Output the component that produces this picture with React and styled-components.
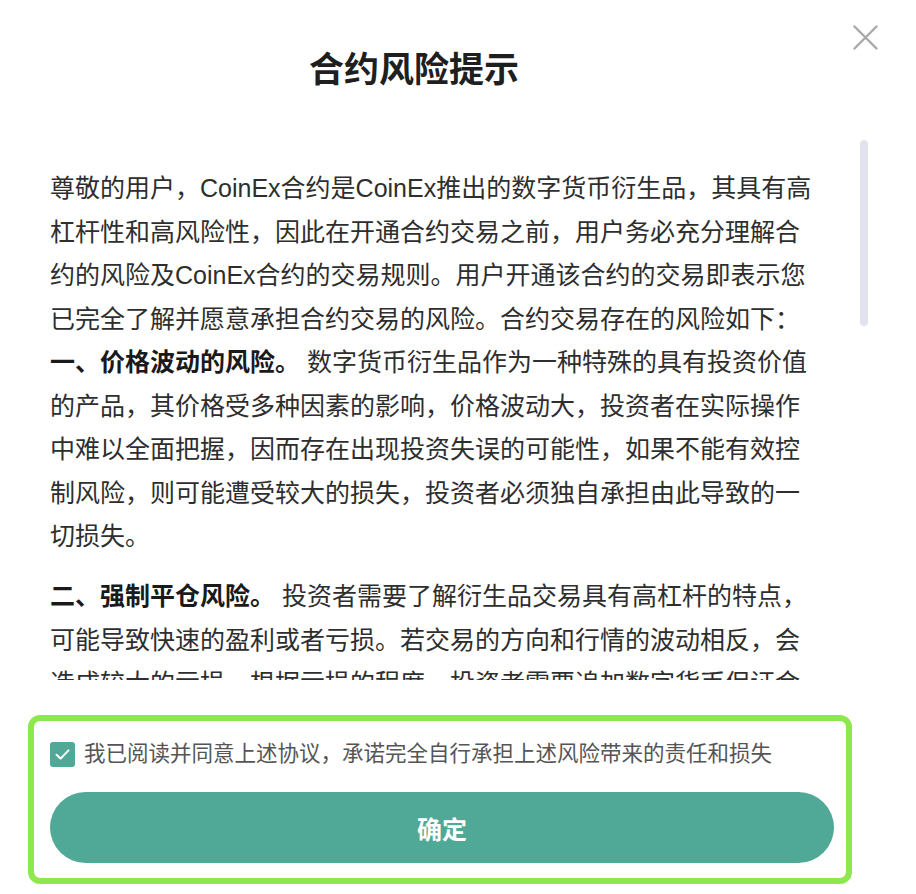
import styled, { createGlobalStyle } from 'styled-components';

const GlobalStyle = createGlobalStyle`
  body {
    margin: 0;
    background: #fff;
    font-family: "Liberation Sans", "Noto Sans CJK SC", sans-serif;
  }
`;

const Modal = styled.div`
  position: relative;
  width: 916px;
  height: 894px;
  display: flex;
  flex-direction: column;
  box-sizing: border-box;
  overflow: hidden;
`;

const Header = styled.div`
  height: 140px;
  flex-shrink: 0;
  box-sizing: border-box;
  padding: 47px 88px 0 0;
`;

const Title = styled.h2`
  margin: 0;
  text-align: center;
  font-size: 35px;
  line-height: 46px;
  font-weight: 700;
  color: #1f1f1f;
`;

const CloseButton = styled.button`
  position: absolute;
  top: 25px;
  right: 38px;
  width: 25px;
  height: 25px;
  padding: 0;
  border: none;
  background: none;
  cursor: pointer;
`;

const ScrollWrap = styled.div`
  position: relative;
  margin-left: 50px;
  width: 819px;
  height: 540px;
  flex-shrink: 0;
`;

const ScrollArea = styled.div`
  height: 100%;
  overflow-y: auto;

  &::-webkit-scrollbar {
    width: 0;
  }
`;

/* custom thumb drawn over the list, the native bar is hidden in the shot */
const ScrollThumb = styled.div`
  position: absolute;
  top: 0;
  right: 1px;
  width: 8px;
  height: 186px;
  border-radius: 4px;
  background: #e1e4ee;
`;

const Content = styled.div`
  width: 768px;
  padding: 27px 0 38px;
`;

const Paragraph = styled.p`
  margin: 0 0 16.5px;
  font-size: 25px;
  line-height: 43.5px;
  color: #2e2e2e;
`;

const Lead = styled.strong`
  font-weight: 700;
  color: #1a1a1a;
`;

const Footer = styled.div`
  margin: 35px 64px 0 28px;
  border: 6px solid #8ce84c;
  border-radius: 12px;
  padding: 21px 12px 15px 16px;
  display: flex;
  flex-direction: column;
  gap: 25px;
`;

const CheckRow = styled.label`
  display: flex;
  align-items: center;
  gap: 9px;
  cursor: pointer;
`;

const CheckBox = styled.span`
  width: 25px;
  height: 25px;
  border-radius: 3px;
  background: ${(p) => (p.$checked ? '#50a996' : '#fff')};
  display: flex;
  align-items: center;
  justify-content: center;
  flex-shrink: 0;
`;

const CheckText = styled.span`
  font-size: 21.5px;
  line-height: 25px;
  color: #555;
`;

const ConfirmButton = styled.button`
  height: 71px;
  width: 100%;
  border: none;
  border-radius: 36px;
  background: #50a996;
  color: #fff;
  font-family: inherit;
  font-size: 25px;
  font-weight: 700;
  cursor: pointer;
`;

const risks = [
  {
    lead: '一、价格波动的风险。',
    text: '数字货币衍生品作为一种特殊的具有投资价值的产品，其价格受多种因素的影响，价格波动大，投资者在实际操作中难以全面把握，因而存在出现投资失误的可能性，如果不能有效控制风险，则可能遭受较大的损失，投资者必须独自承担由此导致的一切损失。',
  },
  {
    lead: '二、强制平仓风险。',
    text: '投资者需要了解衍生品交易具有高杠杆的特点，可能导致快速的盈利或者亏损。若交易的方向和行情的波动相反，会造成较大的亏损，根据亏损的程度，投资者需要追加数字货币保证金以维持仓位，否则可能会被强制平仓，投资者必须承担由此导致的一切损失。',
  },
  {
    lead: '三、系统风险。',
    text: '由于网络故障、服务器故障、黑客攻击、通讯线路故障等原因，可能导致交易指令无法及时传输、执行或者出现延迟，从而给投资者造成损失，投资者应当充分了解并自行承担此类风险。',
  },
  {
    lead: '四、政策风险。',
    text: '由于数字货币相关的法律、法规及监管政策可能发生变化，可能会对合约交易产生影响，甚至导致交易暂停或终止，由此产生的损失由投资者自行承担。',
  },
  {
    lead: '五、不可抗力风险。',
    text: '因地震、火灾、战争、政府行为等不可抗力因素导致的交易中断、延误等风险，CoinEx不承担任何责任，投资者应自行承担由此造成的损失。',
  },
];

const CloseIcon = () => (
  <svg width="25" height="25" viewBox="0 0 25 25">
    <path d="M1.5 1.5 L23.5 23.5 M23.5 1.5 L1.5 23.5" stroke="#a9a9a9" strokeWidth="2.4" strokeLinecap="round" />
  </svg>
);

const CheckIcon = () => (
  <svg width="17" height="17" viewBox="0 0 17 17">
    <path d="M2.5 8.8 L6.6 12.6 L14.5 4.4" fill="none" stroke="#fff" strokeWidth="2" strokeLinecap="round" strokeLinejoin="round" />
  </svg>
);

const App = () => {
  return (
    <>
      <GlobalStyle />
      <Modal>
        <Header>
          <Title>合约风险提示</Title>
        </Header>
        <CloseButton aria-label="close">
          <CloseIcon />
        </CloseButton>

        <ScrollWrap>
          <ScrollArea>
            <Content>
              <Paragraph>
                尊敬的用户，CoinEx合约是CoinEx推出的数字货币衍生品，其具有高杠杆性和高风险性，因此在开通合约交易之前，用户务必充分理解合约的风险及CoinEx合约的交易规则。用户开通该合约的交易即表示您已完全了解并愿意承担合约交易的风险。合约交易存在的风险如下：
                <br />
                <Lead>{risks[0].lead}</Lead> {risks[0].text}
              </Paragraph>
              {risks.slice(1).map((r) => (
                <Paragraph key={r.lead}>
                  <Lead>{r.lead}</Lead> {r.text}
                </Paragraph>
              ))}
              <Paragraph>
                以上风险揭示并不能涵盖合约交易的全部风险，投资者在参与合约交易之前，应当根据自身的财务状况和风险承受能力，谨慎做出投资决策。
              </Paragraph>
            </Content>
          </ScrollArea>
          <ScrollThumb />
        </ScrollWrap>

        <Footer>
          <CheckRow>
            <CheckBox $checked>
              <CheckIcon />
            </CheckBox>
            <CheckText>我已阅读并同意上述协议，承诺完全自行承担上述风险带来的责任和损失</CheckText>
          </CheckRow>
          <ConfirmButton>确定</ConfirmButton>
        </Footer>
      </Modal>
    </>
  );
};

export default App;
